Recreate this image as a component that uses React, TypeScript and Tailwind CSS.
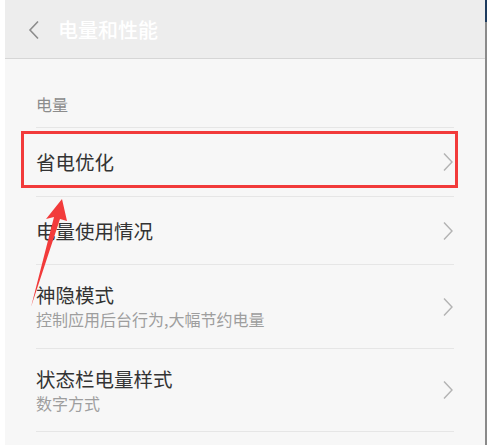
import React from "react";

interface IRow {
  title: string;
  subtitle?: string;
  height: string;
}

const rows: IRow[] = [
  { title: "省电优化", height: "h-[69px]" },
  { title: "电量使用情况", height: "h-[68px]" },
  { title: "神隐模式", subtitle: "控制应用后台行为,大幅节约电量", height: "h-[84px]" },
  { title: "状态栏电量样式", subtitle: "数字方式", height: "h-[83px]" },
];

const Chevron: React.FC = () => (
  <svg width="12" height="20" viewBox="0 0 12 20" fill="none">
    <path d="M2 1.5 L10 10 L2 18.5" stroke="#b3b3b3" strokeWidth="1.4" />
  </svg>
);

const App: React.FC = () => {
  return (
    <div
      className="relative w-[487px] h-[445px] overflow-hidden flex bg-white"
      style={{ fontFamily: '"Noto Sans CJK SC", "Noto Sans", sans-serif' }}
    >
      {/* left light strip */}
      <div className="w-[5px] h-full bg-white" />

      {/* main */}
      <div className="flex-1 flex flex-col bg-[#f7f7f7]">
        {/* Header */}
        <div className="h-[59px] shrink-0 bg-[#ededed] border-b border-[#d6d6d6] flex items-center pl-[23px]">
          <svg width="12" height="20" viewBox="0 0 12 20" fill="none" className="mt-[2px]">
            <path d="M10 1.5 L2 10 L10 18.5" stroke="#8c8c8c" strokeWidth="1.6" />
          </svg>
          <span className="ml-[18px] text-[20px] font-medium text-white leading-none mt-[2px]">电量和性能</span>
        </div>

        {/* Content */}
        <div className="px-[31px] flex flex-col">
          <div className="h-[69px] flex items-end pb-[15px] border-b border-[#e6e6e6]">
            <span className="text-[16px] text-[#8c8c8c] leading-none">电量</span>
          </div>

          {rows.map((row) => (
            <div
              key={row.title}
              className={`flex items-center justify-between border-b border-[#e6e6e6] ${row.height}`}
            >
              <div className="flex flex-col">
                <span className="text-[19.5px] text-[#333333] leading-[24px]">{row.title}</span>
                {row.subtitle && (
                  <span className="text-[16px] text-[#9e9e9e] leading-[22px] mt-[1px]">{row.subtitle}</span>
                )}
              </div>
              <Chevron />
            </div>
          ))}
        </div>
      </div>

      {/* right edge */}
      <div className="w-[2px] h-full bg-[#8a8a8a] flex flex-col">
        <div className="h-[22px] bg-[#1d3b5e]" />
      </div>

      {/* red highlight box */}
      <div className="absolute left-[21px] top-[131px] w-[437px] h-[57px] border-[3px] border-[#f23b3b]" />

      {/* red arrow */}
      <svg className="absolute left-0 top-0" width="487" height="445" viewBox="0 0 487 445">
        <polygon points="62,199 46,219 54,217 31,307 60,219 67,221" fill="#f23b3b" />
      </svg>
    </div>
  );
};

export default App;
